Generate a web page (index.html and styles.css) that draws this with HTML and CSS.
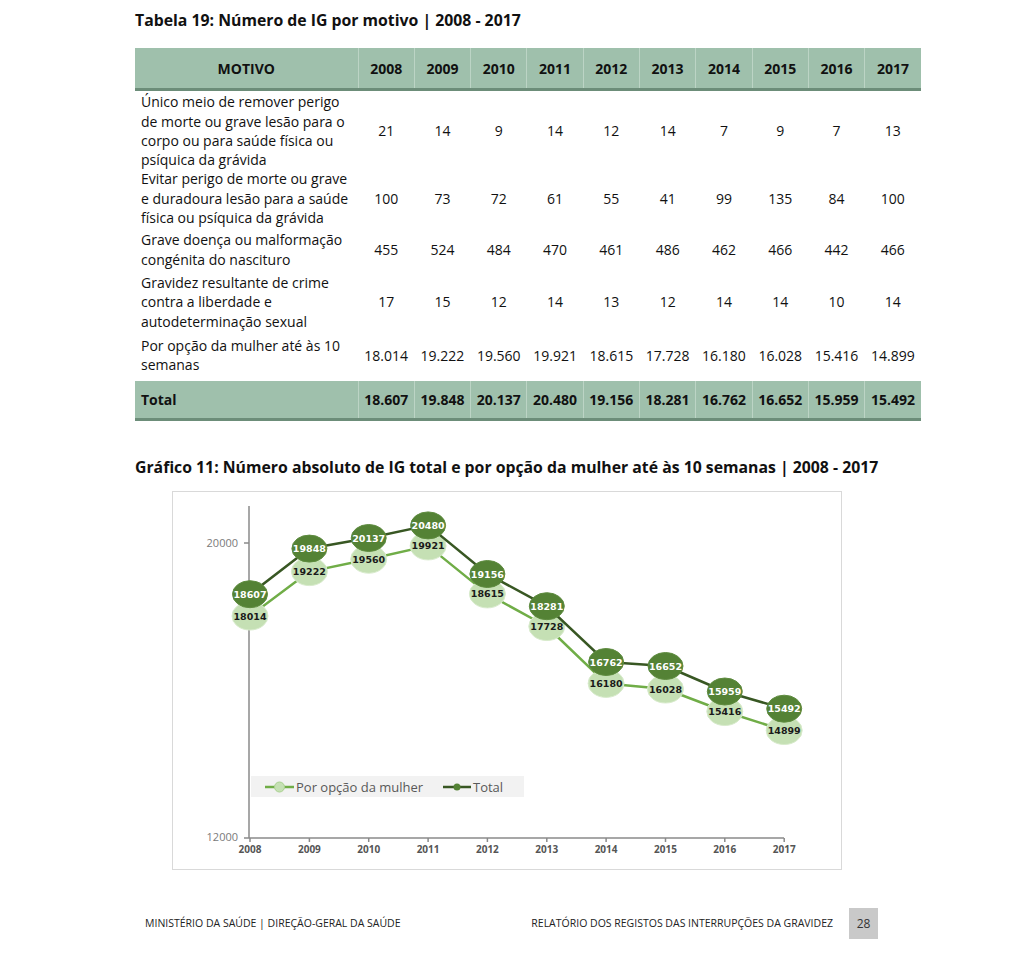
FILE: index.html
```html
<!DOCTYPE html>
<html lang="pt">
<head>
<meta charset="utf-8">
<title>Tabela 19</title>
<link rel="stylesheet" href="styles.css">
</head>
<body>
<div class="page">
  <h1 class="title">Tabela 19: Número de IG por motivo | 2008 - 2017</h1>
  <table class="data">
    <colgroup><col class="c-motivo"><col span="10" class="c-year"></colgroup>
    <thead>
      <tr><th>MOTIVO</th><th>2008</th><th>2009</th><th>2010</th><th>2011</th><th>2012</th><th>2013</th><th>2014</th><th>2015</th><th>2016</th><th>2017</th></tr>
    </thead>
    <tbody>
      <tr class="r1"><td class="lbl">Único meio de remover perigo<br>de morte ou grave lesão para o<br>corpo ou para saúde física ou<br>psíquica da grávida</td><td>21</td><td>14</td><td>9</td><td>14</td><td>12</td><td>14</td><td>7</td><td>9</td><td>7</td><td>13</td></tr>
      <tr class="r2"><td class="lbl">Evitar perigo de morte ou grave<br>e duradoura lesão para a saúde<br>física ou psíquica da grávida</td><td>100</td><td>73</td><td>72</td><td>61</td><td>55</td><td>41</td><td>99</td><td>135</td><td>84</td><td>100</td></tr>
      <tr class="r3"><td class="lbl">Grave doença ou malformação<br>congénita do nascituro</td><td>455</td><td>524</td><td>484</td><td>470</td><td>461</td><td>486</td><td>462</td><td>466</td><td>442</td><td>466</td></tr>
      <tr class="r4"><td class="lbl">Gravidez resultante de crime<br>contra a liberdade e<br>autodeterminação sexual</td><td>17</td><td>15</td><td>12</td><td>14</td><td>13</td><td>12</td><td>14</td><td>14</td><td>10</td><td>14</td></tr>
      <tr class="r5"><td class="lbl">Por opção da mulher até às 10<br>semanas</td><td>18.014</td><td>19.222</td><td>19.560</td><td>19.921</td><td>18.615</td><td>17.728</td><td>16.180</td><td>16.028</td><td>15.416</td><td>14.899</td></tr>
    </tbody>
    <tfoot>
      <tr><td class="lbl">Total</td><td>18.607</td><td>19.848</td><td>20.137</td><td>20.480</td><td>19.156</td><td>18.281</td><td>16.762</td><td>16.652</td><td>15.959</td><td>15.492</td></tr>
    </tfoot>
  </table>

  <h2 class="chart-title">Gráfico 11: Número absoluto de IG total e por opção da mulher até às 10 semanas | 2008 - 2017</h2>
  <div class="chart">
    <svg width="668" height="377" viewBox="173 492 668 377" xmlns="http://www.w3.org/2000/svg">
      <g class="axis">
        <line x1="249" y1="506" x2="249" y2="838"/>
        <line x1="244" y1="543" x2="249" y2="543"/>
        <line x1="244" y1="838" x2="249" y2="838"/>
        <line x1="249" y1="838" x2="784" y2="838"/>
        <line x1="250" y1="838" x2="250" y2="842"/>
        <line x1="309.4" y1="838" x2="309.4" y2="842"/>
        <line x1="368.7" y1="838" x2="368.7" y2="842"/>
        <line x1="428.1" y1="838" x2="428.1" y2="842"/>
        <line x1="487.4" y1="838" x2="487.4" y2="842"/>
        <line x1="546.8" y1="838" x2="546.8" y2="842"/>
        <line x1="606.1" y1="838" x2="606.1" y2="842"/>
        <line x1="665.5" y1="838" x2="665.5" y2="842"/>
        <line x1="724.8" y1="838" x2="724.8" y2="842"/>
        <line x1="784.2" y1="838" x2="784.2" y2="842"/>
      </g>
      <g class="ylab">
        <text x="238" y="547">20000</text>
        <text x="238" y="841">12000</text>
      </g>
      <g class="xlab">
        <text x="250" y="852.5">2008</text>
        <text x="309.4" y="852.5">2009</text>
        <text x="368.7" y="852.5">2010</text>
        <text x="428.1" y="852.5">2011</text>
        <text x="487.4" y="852.5">2012</text>
        <text x="546.8" y="852.5">2013</text>
        <text x="606.1" y="852.5">2014</text>
        <text x="665.5" y="852.5">2015</text>
        <text x="724.8" y="852.5">2016</text>
        <text x="784.2" y="852.5">2017</text>
      </g>

      <polyline class="line-light" points="250,616 309.4,571.6 368.7,559.2 428.1,545.9 487.4,593.9 546.8,626.5 606.1,683.4 665.5,689 724.8,711.5 784.2,730.5"/>
      <g class="pt-light">
        <ellipse cx="250" cy="616" rx="18" ry="14"/>
        <ellipse cx="309.4" cy="571.6" rx="18" ry="14"/>
        <ellipse cx="368.7" cy="559.2" rx="18" ry="14"/>
        <ellipse cx="428.1" cy="545.9" rx="18" ry="14"/>
        <ellipse cx="487.4" cy="593.9" rx="18" ry="14"/>
        <ellipse cx="546.8" cy="626.5" rx="18" ry="14"/>
        <ellipse cx="606.1" cy="683.4" rx="18" ry="14"/>
        <ellipse cx="665.5" cy="689" rx="18" ry="14"/>
        <ellipse cx="724.8" cy="711.5" rx="18" ry="14"/>
        <ellipse cx="784.2" cy="730.5" rx="18" ry="14"/>
      </g>
      <g class="lab-light">
        <text x="250" y="619.5">18014</text>
        <text x="309.4" y="575.1">19222</text>
        <text x="368.7" y="562.7">19560</text>
        <text x="428.1" y="549.4">19921</text>
        <text x="487.4" y="597.4">18615</text>
        <text x="546.8" y="630">17728</text>
        <text x="606.1" y="686.9">16180</text>
        <text x="665.5" y="692.5">16028</text>
        <text x="724.8" y="715">15416</text>
        <text x="784.2" y="734">14899</text>
      </g>

      <polyline class="line-dark" points="250,594.2 309.4,548.6 368.7,538 428.1,525.4 487.4,574 546.8,606.2 606.1,662 665.5,666 724.8,691.5 784.2,708.7"/>
      <g class="pt-dark">
        <ellipse cx="250" cy="594.2" rx="17.5" ry="13.5"/>
        <ellipse cx="309.4" cy="548.6" rx="17.5" ry="13.5"/>
        <ellipse cx="368.7" cy="538" rx="17.5" ry="13.5"/>
        <ellipse cx="428.1" cy="525.4" rx="17.5" ry="13.5"/>
        <ellipse cx="487.4" cy="574" rx="17.5" ry="13.5"/>
        <ellipse cx="546.8" cy="606.2" rx="17.5" ry="13.5"/>
        <ellipse cx="606.1" cy="662" rx="17.5" ry="13.5"/>
        <ellipse cx="665.5" cy="666" rx="17.5" ry="13.5"/>
        <ellipse cx="724.8" cy="691.5" rx="17.5" ry="13.5"/>
        <ellipse cx="784.2" cy="708.7" rx="17.5" ry="13.5"/>
      </g>
      <g class="lab-dark">
        <text x="250" y="597.7">18607</text>
        <text x="309.4" y="552.1">19848</text>
        <text x="368.7" y="541.5">20137</text>
        <text x="428.1" y="528.9">20480</text>
        <text x="487.4" y="577.5">19156</text>
        <text x="546.8" y="609.7">18281</text>
        <text x="606.1" y="665.5">16762</text>
        <text x="665.5" y="669.5">16652</text>
        <text x="724.8" y="695">15959</text>
        <text x="784.2" y="712.2">15492</text>
      </g>

      <g class="legend">
        <rect x="251" y="776" width="273" height="21" class="legend-bg"/>
        <line x1="265" y1="787" x2="294" y2="787" class="leg-light"/>
        <circle cx="279.5" cy="787" r="5" class="leg-light-dot"/>
        <text x="296" y="791.5">Por opção da mulher</text>
        <line x1="443" y1="787" x2="471" y2="787" class="leg-dark"/>
        <circle cx="457" cy="787" r="3.5" class="leg-dark-dot"/>
        <text x="473" y="791.5">Total</text>
      </g>
    </svg>
  </div>

  <footer class="footer">
    <span class="foot-left">MINISTÉRIO DA SAÚDE | DIREÇÃO-GERAL DA SAÚDE</span>
    <span class="foot-right">RELATÓRIO DOS REGISTOS DAS INTERRUPÇÕES DA GRAVIDEZ</span>
    <span class="page-num">28</span>
  </footer>
</div>
</body>
</html>
```

FILE: styles.css
```css
html, body {
  margin: 0;
  padding: 0;
  background: #ffffff;
}

.page {
  width: 786px;
  padding: 10px 0 0 135px;
  font-family: "Open Sans", "DejaVu Sans", sans-serif;
  color: #111111;
}

.title {
  margin: 0;
  font-size: 15.8px;
  line-height: 20px;
  font-weight: 700;
  color: #111111;
  white-space: nowrap;
}

.data {
  margin-top: 18px;
  width: 786px;
  border-collapse: collapse;
  table-layout: fixed;
  font-size: 14px;
  line-height: 19.3px;
}

.c-motivo { width: 223px; }
.c-year { width: 56.3px; }

.data th {
  background: #9fc0ac;
  font-weight: 700;
  text-align: center;
  padding: 11px 0 10px;
  border-bottom: 3px solid #6c8d79;
  border-left: 1px solid #bcd4c5;
  white-space: nowrap;
}
.data th:first-child { border-left: none; }

.data td {
  text-align: center;
  vertical-align: middle;
  padding: 0;
  white-space: nowrap;
}

.data td.lbl {
  text-align: left;
  padding-left: 6px;
}

.data .r1 td { padding-top: 1px; padding-bottom: 0; }
.data .r2 td { padding-top: 0; padding-bottom: 2px; }
.data .r3 td { padding-top: 1px; padding-bottom: 2px; }
.data .r4 td { padding-top: 2px; padding-bottom: 3px; }
.data .r5 td { padding-top: 2px; padding-bottom: 7px; }

.data tfoot td {
  background: #9fc0ac;
  font-weight: 700;
  padding-top: 9px;
  padding-bottom: 8px;
  border-bottom: 3px solid #6c8d79;
  border-left: 1px solid #bcd4c5;
}
.data tfoot td.lbl { border-left: none; }

.chart-title {
  margin: 36px 0 0;
  font-size: 15.8px;
  line-height: 20px;
  font-weight: 700;
  color: #111111;
  white-space: nowrap;
}

.chart {
  margin: 14px 0 0 37px;
  width: 668px;
  height: 377px;
  border: 1px solid #d9d9d9;
}
.chart svg { display: block; }

.axis line { stroke: #8a8a8a; stroke-width: 1.5; }

.ylab text {
  font-family: "Open Sans", sans-serif;
  font-size: 11px;
  fill: #7a7a7a;
  text-anchor: end;
}
.xlab text {
  font-family: "Open Sans", sans-serif;
  font-size: 10px;
  font-weight: 700;
  fill: #555555;
  text-anchor: middle;
}

.line-light { fill: none; stroke: #70ad47; stroke-width: 2.5; stroke-linejoin: round; }
.line-dark { fill: none; stroke: #385723; stroke-width: 2.5; stroke-linejoin: round; }

.pt-light ellipse { fill: #c5e0b4; stroke: #d8ebcc; stroke-width: 1; }
.pt-dark ellipse { fill: #548235; stroke: #5f8c40; stroke-width: 1; }

.lab-light text, .lab-dark text {
  font-family: "DejaVu Sans", sans-serif;
  font-size: 9.5px;
  font-weight: 700;
  text-anchor: middle;
}
.lab-light text { fill: #1a1a1a; }
.lab-dark text { fill: #ffffff; }

.legend-bg { fill: #f2f2f2; }
.leg-light { stroke: #70ad47; stroke-width: 2.5; }
.leg-light-dot { fill: #c5e0b4; stroke: #a9d18e; stroke-width: 1; }
.leg-dark { stroke: #385723; stroke-width: 2.5; }
.leg-dark-dot { fill: #548235; }
.legend text {
  font-family: "Open Sans", sans-serif;
  font-size: 13px;
  fill: #595959;
}

.footer {
  display: flex;
  align-items: center;
  margin: 38px 0 0 10px;
  width: 733px;
  font-size: 10.5px;
  color: #222222;
}
.foot-left { flex: 1; white-space: nowrap; }
.foot-right { white-space: nowrap; margin-right: 16px; }
.page-num {
  width: 29px;
  height: 31px;
  display: flex;
  align-items: center;
  justify-content: center;
  background: #c9c9c9;
  font-size: 12px;
  color: #333333;
}
```
